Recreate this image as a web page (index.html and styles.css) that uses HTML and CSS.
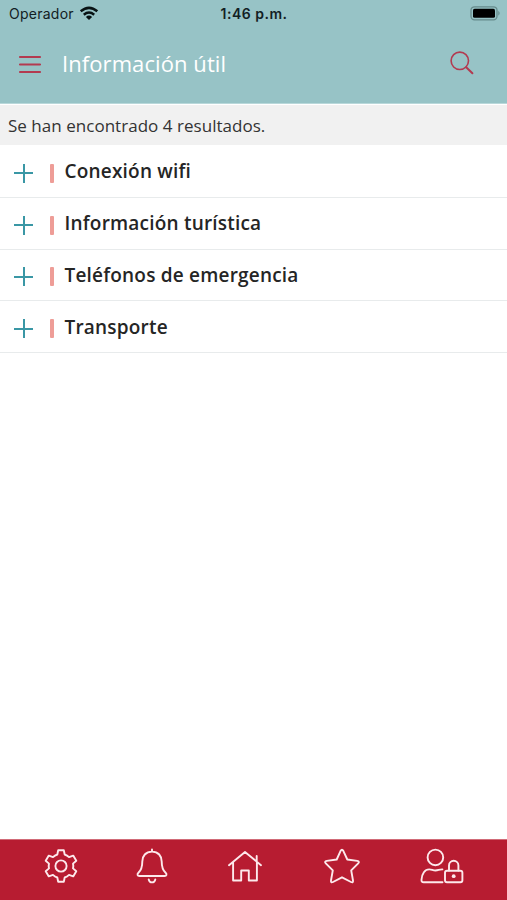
FILE: index.html
```html
<!DOCTYPE html>
<html lang="es">
<head>
<meta charset="utf-8">
<meta name="viewport" content="width=device-width">
<title>Información útil</title>
<link rel="stylesheet" href="styles.css">
</head>
<body>
<header class="header">
  <div class="status">
    <div class="carrier"><span>Operador</span>
      <svg class="wifi" width="20" height="15" viewBox="0 0 20 15"><g fill="none" stroke="#081214" stroke-width="2.5"><path d="M1.7 5.3Q10-1.6 18.3 5.3"/><path d="M4.8 8.7Q10 4.4 15.2 8.7"/></g><path d="M6.9 10.9Q10 8.3 13.1 10.9L10 14Z" fill="#081214"/></svg>
    </div>
    <div class="time">1:46 p.m.</div>
    <svg class="battery" width="31" height="15" viewBox="0 0 31 15"><rect x="1" y=".8" width="26" height="13" rx="3.5" fill="none" stroke="#668b8c" stroke-width="1.3"/><rect x="3" y="2.8" width="22" height="9" rx="1.6" fill="#000"/><path d="M28.3 4.8Q31 7.3 28.3 9.8Z" fill="#668b8c"/></svg>
  </div>
  <div class="toolbar">
    <svg width="22" height="19" viewBox="0 0 22 19"><path d="M.8 2H21.2M.8 9.5H21.2M.8 17H21.2" stroke="#b33a50" stroke-width="1.9" stroke-linecap="round"/></svg>
    <h1 class="title">Información útil</h1>
    <svg class="search" width="24" height="24" viewBox="0 0 24 24"><g fill="none" stroke="#b33a50" stroke-width="1.6" stroke-linecap="round"><circle cx="9.8" cy="9.8" r="8.7"/><path d="M16.2 16.2 22.4 22.3" stroke-width="2"/></g></svg>
  </div>
</header>
<p class="results">Se han encontrado 4 resultados.</p>
<main class="list">
  <div class="row"><span class="plus"></span><span class="bar"></span><span class="label">Conexión wifi</span></div>
  <div class="row"><span class="plus"></span><span class="bar"></span><span class="label">Información turística</span></div>
  <div class="row"><span class="plus"></span><span class="bar"></span><span class="label">Teléfonos de emergencia</span></div>
  <div class="row"><span class="plus"></span><span class="bar"></span><span class="label">Transporte</span></div>
</main>
<nav class="nav">
  <svg class="gear" width="34" height="36" viewBox="0 0 34 36"><path d="M14.2 2.2H19.8L20.7 6.5Q23.2 7.3 25 9.1L29.2 7.6 32.3 12.8 29 15.6Q29.6 18 29 20.4L32.3 23.2 29.2 28.4 25 26.9Q23.2 28.7 20.7 29.5L19.8 33.8H14.2L13.3 29.5Q10.8 28.7 9 26.9L4.8 28.4 1.7 23.2 5 20.4Q4.4 18 5 15.6L1.7 12.8 4.8 7.6 9 9.1Q10.8 7.3 13.3 6.5Z"/><circle cx="17" cy="18" r="5.6"/></svg>
  <svg class="bell" width="34" height="36" viewBox="0 0 34 36"><path d="M17 1.5V3.6M17 3.6C10.7 3.6 7.3 8 7.3 13.5C7.3 19.4 6.3 22.2 3.4 24.8C1.9 26.2 2.4 28 4.4 28H29.6C31.6 28 32.1 26.2 30.6 24.8C27.7 22.2 26.7 19.4 26.7 13.5C26.7 8 23.3 3.6 17 3.6Z"/><path d="M13.7 31.5Q14.4 34.4 17 34.4T20.3 31.5"/></svg>
  <svg class="home" width="36" height="36" viewBox="0 0 36 36"><path d="M2 17.2 18 3.9 34 17.2M6.1 14V32.5H14.2V22.5H21.8V32.5H29.9V14M29.7 13.5V8"/></svg>
  <svg class="star" width="38" height="36" viewBox="0 0 38 36"><path d="M17.6 2.8Q19 .6 20.3 2.8L24.3 11.5 34.2 12.9Q37 13.4 35.2 15.3L28.2 22.4 30 32.5Q30.4 35.2 28 34L19 29.3 10 34Q7.6 35.2 8 32.5L9.8 22.4 2.8 15.3Q1 13.4 3.8 12.9L13.7 11.5Z"/></svg>
  <svg class="account" width="44" height="36" viewBox="0 0 44 36"><circle cx="15.4" cy="9.4" r="7.8"/><path d="M22.5 34.2H3.6Q1.3 34.2 1.5 31.8C1.8 25.5 5 21.4 9.2 21.4C12 21.4 12.5 22.5 15.5 22.5C18.5 22.5 19 21.3 22.4 21.4"/><rect x="25" y="22.7" width="17.4" height="11.5" rx="2"/><path d="M29 22.5V17.4A4.7 4.7 0 0 1 38.4 17.4V22.5"/><circle class="keyhole" cx="33.7" cy="28.2" r="1.9"/></svg>
</nav>
</body>
</html>
```
FILE: styles.css
```css
* { box-sizing: border-box; }
body {
  margin: 0;
  height: 900px;
  display: flex;
  flex-direction: column;
  overflow: hidden;
  background: #fff;
  font-family: "Noto Sans", sans-serif;
}
svg { display: block; flex: none; }
.header {
  height: 104px;
  background: #97c3c6;
  border-bottom: 1px solid #b9d8da;
}
.status {
  height: 28px;
  padding: 0 6px 0 9px;
  display: grid;
  grid-template-columns: 1fr auto 1fr;
  align-items: center;
  color: #122023;
  font: 14.5px/28px Inter, sans-serif;
}
.carrier { display: flex; align-items: center; gap: 5px; }
.carrier span { font-size: 14px; letter-spacing: .25px; }
.wifi { margin-top: -2px; }
.time { font-size: 14px; font-weight: 600; letter-spacing: .5px; margin-left: -2px; }
.battery { justify-self: end; margin-top: -2px; }
.toolbar {
  height: 72px;
  padding: 0 33px 0 19px;
  display: flex;
  align-items: center;
}
.title {
  margin: -2px 0 0 21px;
  color: #fff;
  font: 400 22px/30px "Open Sans", sans-serif;
  letter-spacing: .08px;
}
.search { margin-left: auto; margin-top: -2px; }
.results {
  height: 40px;
  margin: 1px 0 0;
  padding-left: 8px;
  background: #f1f1f1;
  color: #333;
  font: 17px/41px "Open Sans", sans-serif;
  letter-spacing: .03px;
}
.list { flex: 1; padding-top: 1px; }
.row {
  height: 51.8px;
  padding-left: 14px;
  border-bottom: 1px solid #e8ebec;
  display: flex;
  align-items: center;
}
.plus {
  width: 19px;
  height: 19px;
  margin-top: 4px;
  background:
    linear-gradient(#3a97a5, #3a97a5) center / 19px 2px no-repeat,
    linear-gradient(#3a97a5, #3a97a5) center / 2px 19px no-repeat;
}
.bar {
  width: 4px;
  height: 19px;
  margin: 4px 0 0 17px;
  border-radius: 1px;
  background: #ee9d97;
}
.label {
  margin-left: 10.5px;
  color: #252525;
  font: 600 19px/26px "Open Sans", sans-serif;
  letter-spacing: .2px;
}
.nav {
  height: 61px;
  padding: 8px 0 0 44px;
  background: #b71c31;
  border-top: 1px solid #d16b78;
  display: flex;
}
.nav svg {
  fill: none;
  stroke: #fde9ec;
  stroke-width: 1.9;
  stroke-linejoin: round;
  stroke-linecap: round;
}
.bell { margin-left: 57px; }
.home { margin-left: 58px; }
.star { margin-left: 60px; }
.account { margin-left: 59px; }
.nav .keyhole { fill: #fde9ec; stroke: none; }
```
